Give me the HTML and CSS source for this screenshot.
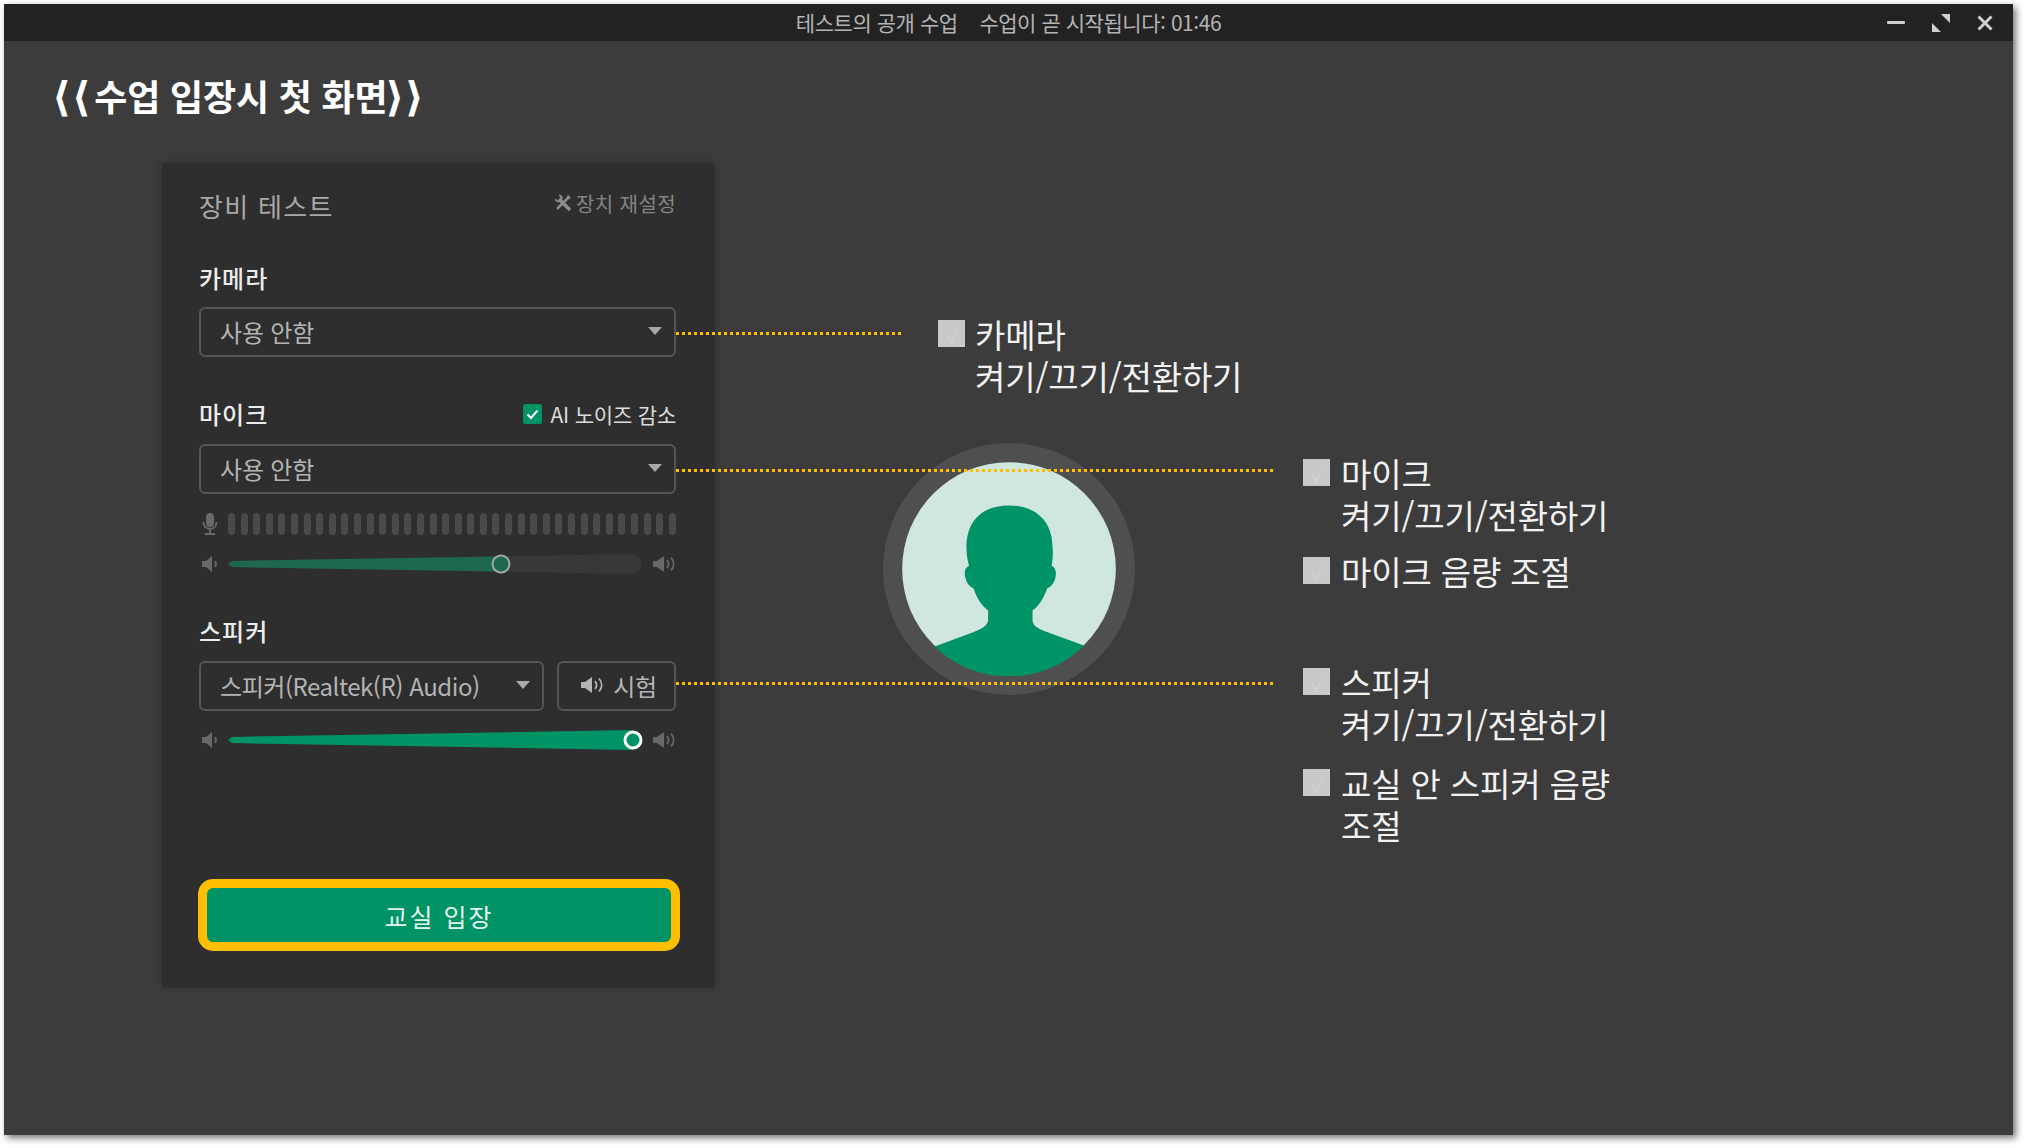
FILE: index.html
```html
<!DOCTYPE html>
<html lang="ko">
<head>
<meta charset="utf-8">
<title>수업 입장시 첫 화면</title>
<link rel="stylesheet" href="styles.css">
</head>
<body>
<svg class="defs" aria-hidden="true">
  <symbol id="spk-low" viewBox="0 0 18 18"><path d="M0 6h4l6-5v16l-6-5H0z"/><path class="arc" d="M13 6c1.300 2 1.300 4 0 6"/></symbol>
  <symbol id="spk-high" viewBox="0 0 23 18"><path d="M0 6h4l7-5v16l-7-5H0z"/><path class="arc" d="M14 5c2 2.500 2 5.500 0 8"/><path class="arc" d="M18 2.500c3.500 4 3.500 9 0 13"/></symbol>
  <symbol id="bullet" viewBox="0 0 27 27"><rect width="27" height="27" fill="#c9c9c9"/><path d="M7 13l5 11h3l6-20-7 15z" fill="#cfcfcf"/></symbol>
</svg>
<div class="window">
  <header class="titlebar">
    <span></span>
    <span class="titlebar-text">테스트의 공개 수업&nbsp;&nbsp;&nbsp; 수업이 곧 시작됩니다: 01:46</span>
    <div class="window-controls">
      <svg class="win-min" viewBox="0 0 18 3"><rect width="18" height="3" rx="1"/></svg>
      <svg class="win-max" viewBox="0 0 18 18"><path d="M9 0h9v9zM0 9l9 9H0z"/></svg>
      <svg class="win-close" viewBox="0 0 16 16"><path d="M1.500 1.500l13 13M14.500 1.500l-13 13"/></svg>
    </div>
  </header>
  <main class="stage">
    <h1 class="page-title"><span class="bracket">⟨⟨</span> 수업 입장시 첫 화면<span class="bracket bracket-end">⟩⟩</span></h1>
    <div class="content">
      <section class="panel">
        <div class="panel-head">
          <h2 class="panel-title">장비 테스트</h2>
          <span class="reset">
            <svg class="tool-icon" viewBox="0 0 18 18">
              <path class="tool-wrench" d="M5 5l11 11"/>
              <path d="M1 4.500L4.500 7 7 4.500 4.500 1C7 0 9.500 2.500 8.500 5.500L6 8C3 9 .5 7 1 4.500z"/>
              <path class="tool-driver" d="M15.500 2.500L3 15"/>
              <path d="M14 1l3 3-2.500 1.500L12.500 3.500z"/>
            </svg>
            장치 재설정
          </span>
        </div>
        <div class="field-label label-first">카메라</div>
        <div class="select callout callout-short"><span>사용 안함</span><i class="caret"></i></div>

        <div class="field-row">
          <div class="field-label">마이크</div>
          <label class="noise">
            <svg class="check" viewBox="0 0 19 20"><rect width="19" height="20" rx="2" fill="#009365"/><path d="M4.500 10.500l3.500 3.500 6.500-7.500" fill="none" stroke="#fff" stroke-width="2"/></svg>
            AI 노이즈 감소
          </label>
        </div>
        <div class="select callout callout-long"><span>사용 안함</span><i class="caret"></i></div>

        <div class="meter">
          <svg class="mic-icon" viewBox="0 0 16 22"><rect x="4" y="0" width="8" height="14" rx="4"/><path class="arc" d="M1.500 9c0 9 13 9 13 0M8 16v4M3 21h10"/></svg>
          <div class="bars">
            <i></i><i></i><i></i><i></i><i></i><i></i><i></i><i></i><i></i><i></i><i></i><i></i>
            <i></i><i></i><i></i><i></i><i></i><i></i><i></i><i></i><i></i><i></i><i></i><i></i>
            <i></i><i></i><i></i><i></i><i></i><i></i><i></i><i></i><i></i><i></i><i></i><i></i>
          </div>
        </div>
        <div class="slider-row">
          <svg class="vol-low"><use href="#spk-low"/></svg>
          <div class="slider slider-dim">
            <div class="track"><div class="fill" style="width:66%"></div></div>
            <i class="knob" style="left:66%"></i>
          </div>
          <svg class="vol-high"><use href="#spk-high"/></svg>
        </div>

        <div class="field-label label-speaker">스피커</div>
        <div class="speaker-row">
          <div class="select select-speaker"><span>스피커(Realtek(R) Audio)</span><i class="caret"></i></div>
          <button class="test callout callout-long callout-raised">
            <svg class="test-icon"><use href="#spk-high"/></svg>
            시험
          </button>
        </div>
        <div class="slider-row">
          <svg class="vol-low"><use href="#spk-low"/></svg>
          <div class="slider slider-on">
            <div class="track"><div class="fill" style="width:98%"></div></div>
            <i class="knob" style="left:98%"></i>
          </div>
          <svg class="vol-high"><use href="#spk-high"/></svg>
        </div>

        <button class="enter">교실 입장</button>
      </section>

      <aside class="notes">
        <div class="note note-camera">
          <svg class="bullet"><use href="#bullet"/></svg>
          <p>카메라<br>켜기/끄기/전환하기</p>
        </div>
        <div class="notes-row">
          <div class="avatar">
            <svg class="avatar-img" viewBox="127 125 641 641">
              <circle cx="447.500" cy="445.500" r="320" fill="#d0e7df"/>
              <path fill="#009365" d="M447 255C370 255 320 300 320 380C320 400 323 420 328 436C316 440 313 455 316 468C319 485 328 498 341 503C350 530 365 555 385 570L385 598C385 615 365 625 340 635L225 678A320 320 0 0 0 672 675L555 632C535 624 518 615 518 598L518 570C538 555 553 530 562 503C575 498 585 485 587 468C590 455 586 440 575 436C578 420 580 400 578 380C578 300 525 255 447 255Z"/>
            </svg>
          </div>
          <div class="notes-list">
            <div class="note">
              <svg class="bullet"><use href="#bullet"/></svg>
              <p>마이크<br>켜기/끄기/전환하기</p>
            </div>
            <div class="note note-gap-s">
              <svg class="bullet"><use href="#bullet"/></svg>
              <p>마이크 음량 조절</p>
            </div>
            <div class="note note-gap-l">
              <svg class="bullet"><use href="#bullet"/></svg>
              <p>스피커<br>켜기/끄기/전환하기</p>
            </div>
            <div class="note note-gap-m">
              <svg class="bullet"><use href="#bullet"/></svg>
              <p>교실 안 스피커 음량<br>조절</p>
            </div>
          </div>
        </div>
      </aside>
    </div>
  </main>
</div>
</body>
</html>
```

FILE: styles.css
```css
* { box-sizing: border-box; }

html, body {
  margin: 0;
  height: 100%;
  overflow: hidden;
  background: #fff;
}

body {
  padding: 4px 14px 13px 4px;
  font-family: "Noto Sans CJK KR", "Noto Sans", sans-serif;
}

.defs { width: 0; height: 0; position: absolute; }

.window {
  height: 1131px;
  background: #3c3c3c;
  box-shadow: 3px 3px 7px rgba(0, 0, 0, .55);
  display: flex;
  flex-direction: column;
}

/* title bar */
.titlebar {
  height: 37px;
  flex: none;
  background: #222;
  display: grid;
  grid-template-columns: 1fr auto 1fr;
  align-items: center;
}
.titlebar-text {
  color: #b4b4b4;
  font-size: 21px;
  line-height: 37px;
  letter-spacing: -.45px;
}
.window-controls {
  display: flex;
  align-items: center;
  justify-content: flex-end;
  gap: 27px;
  padding-right: 20px;
}
.window-controls svg { display: block; }
.win-min { width: 18px; height: 3px; fill: #d0d0d0; }
.win-max { width: 18px; height: 18px; fill: #d0d0d0; }
.win-close { width: 16px; height: 16px; fill: none; stroke: #d0d0d0; stroke-width: 3; }

/* stage */
.stage { flex: 1; padding-top: 29px; }

.page-title {
  height: 50px;
  margin: 0 0 43px 48px;
  font-size: 36px;
  line-height: 50px;
  font-weight: 700;
  letter-spacing: -.2px;
  color: #fff;
  white-space: nowrap;
}
.bracket {
  font-family: "DejaVu Sans", sans-serif;
  font-weight: 700;
  font-size: 41px;
  line-height: 1;
  letter-spacing: 1px;
  margin-right: -7px;
}
.bracket-end { margin-right: 0; margin-left: -2px; }

.content {
  display: flex;
  align-items: flex-start;
  padding-left: 158px;
}

/* panel */
.panel {
  position: relative;
  z-index: 1;
  flex: none;
  width: 553px;
  height: 825px;
  padding: 24px 39px 0 37px;
  background: #2e2e2e;
  border-radius: 3px;
  box-shadow: 0 0 8px rgba(0, 0, 0, .22);
}
.panel-head {
  display: flex;
  justify-content: space-between;
  align-items: center;
  height: 36px;
}
.panel-title {
  margin: 0;
  font-size: 26px;
  font-weight: 400;
  letter-spacing: 1.3px;
  color: #a8a8a8;
}
.reset {
  display: flex;
  align-items: center;
  gap: 4px;
  margin-bottom: 4px;
  font-size: 20px;
  letter-spacing: .4px;
  color: #858585;
}
.tool-icon { width: 18px; height: 18px; fill: #8c8c8c; }
.tool-wrench, .tool-driver { fill: none; stroke: #8c8c8c; }
.tool-wrench { stroke-width: 3.500; }
.tool-driver { stroke-width: 2.500; }

.field-label {
  font-size: 24px;
  line-height: 30px;
  font-weight: 500;
  letter-spacing: 1px;
  color: #ececec;
}
.label-first { margin-top: 40px; margin-bottom: 14px; }
.label-speaker { margin-top: 42px; margin-bottom: 15px; }

.field-row {
  display: flex;
  justify-content: space-between;
  align-items: center;
  margin-top: 42px;
  margin-bottom: 15px;
}
.noise {
  display: flex;
  align-items: center;
  gap: 9px;
  font-size: 21px;
  line-height: 30px;
  letter-spacing: -.2px;
  color: #dcdcdc;
}
.check { width: 19px; height: 20px; }

.select {
  position: relative;
  height: 50px;
  padding: 0 20px 2px 19px;
  display: flex;
  justify-content: space-between;
  align-items: center;
  border: 2px solid #555;
  border-radius: 6px;
  font-size: 24px;
  letter-spacing: -.2px;
  color: #b4b4b4;
}
.select-speaker { letter-spacing: -.45px; }
.caret {
  width: 0;
  height: 0;
  margin-right: -8px;
  border-left: 7px solid transparent;
  border-right: 7px solid transparent;
  border-top: 8px solid #a8a8a8;
}

/* dotted leader lines running from a control to its note */
.callout::after {
  content: "";
  position: absolute;
  left: calc(100% + 2px);
  top: 50%;
  height: 3px;
  background: repeating-linear-gradient(90deg, #ffbf00 0 3px, transparent 3px 6px);
}
.callout-short::after { width: 225px; }
.callout-long::after { width: 597px; }
.callout-raised::after { top: calc(50% - 4px); }

.meter {
  display: flex;
  align-items: center;
  justify-content: space-between;
  height: 22px;
  margin-top: 19px;
  padding-left: 3px;
}
.mic-icon { width: 16px; height: 22px; fill: #696969; }
.mic-icon .arc { fill: none; stroke: #696969; stroke-width: 2; }
.bars {
  width: 448px;
  display: flex;
  justify-content: space-between;
}
.bars i {
  width: 7px;
  height: 22px;
  border-radius: 4px;
  background: #4a4a4a;
}

.slider-row {
  display: flex;
  align-items: center;
  height: 20px;
  margin-top: 19px;
  padding-left: 3px;
}
.vol-low {
  width: 18px;
  height: 18px;
  flex: none;
  color: #696969;
  fill: #696969;
}
.vol-high {
  width: 23px;
  height: 18px;
  flex: none;
  margin-left: 12px;
  color: #696969;
  fill: #696969;
}
symbol .arc { fill: none; stroke: currentColor; stroke-width: 1.800; }
.slider {
  position: relative;
  width: 415px;
  height: 20px;
  margin-left: 8px;
}
.track {
  height: 100%;
  background: #383838;
  clip-path: polygon(4px 35%, 98% 0, 100% 25%, 100% 75%, 98% 100%, 4px 65%, 0 50%);
}
.fill { height: 100%; }
.knob {
  position: absolute;
  top: 50%;
  width: 19px;
  height: 19px;
  border-radius: 50%;
  transform: translate(-50%, -50%);
}
.slider-dim .fill { background: #1e6850; }
.slider-dim .knob { background: #1e6850; border: 2px solid #a6a6a6; }
.slider-on .fill { background: #009365; }
.slider-on .knob { background: #009365; border: 3px solid #fff; }

.speaker-row {
  display: flex;
  justify-content: space-between;
}
.select-speaker { width: 345px; }
.test {
  position: relative;
  width: 119px;
  height: 50px;
  padding: 0 0 2px 5px;
  display: flex;
  align-items: center;
  justify-content: center;
  gap: 9px;
  background: none;
  border: 2px solid #555;
  border-radius: 6px;
  font: inherit;
  font-size: 24px;
  letter-spacing: -.4px;
  color: #b4b4b4;
}
.test-icon { width: 23px; height: 18px; color: #b4b4b4; fill: #b4b4b4; }

.enter {
  display: block;
  width: 482px;
  height: 72px;
  margin: 129px 0 0 -1px;
  padding: 2px 0 0;
  background: #009365;
  border: 9px solid #ffbf00;
  border-radius: 15px;
  font: inherit;
  font-size: 25px;
  letter-spacing: 2px;
  color: #e4f5ee;
}

/* notes on the right */
.notes { padding-top: 152px; }
.note {
  display: flex;
  align-items: flex-start;
  gap: 11px;
}
.note p {
  margin: -1px 0 0;
  font-size: 33px;
  line-height: 41.500px;
  letter-spacing: -.15px;
  color: #f2f2f2;
}
.bullet {
  width: 27px;
  height: 27px;
  flex: none;
  margin-top: 5px;
}
.note-camera { margin-left: 223px; gap: 10px; }
.notes-row {
  display: flex;
  align-items: flex-start;
  margin-top: 46px;
  margin-left: 168px;
}
.avatar {
  flex: none;
  width: 252px;
  height: 252px;
  padding: 19px;
  border-radius: 50%;
  background: #4f4f4f;
}
.avatar-img { display: block; width: 214px; height: 214px; }
.notes-list { margin-left: 168px; padding-top: 11px; }
.note-gap-s { margin-top: 16px; }
.note-gap-l { margin-top: 70.500px; }
.note-gap-m { margin-top: 19px; }
```
